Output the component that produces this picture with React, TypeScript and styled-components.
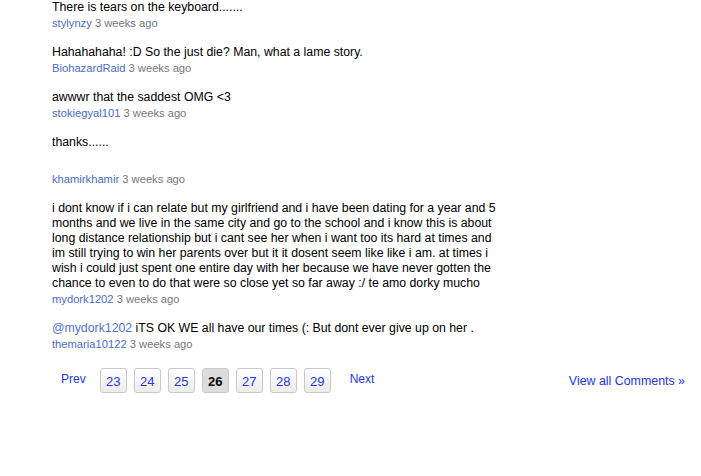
import styled, { createGlobalStyle } from "styled-components";

const GlobalStyle = createGlobalStyle`
  html, body {
    margin: 0;
    padding: 0;
    background: #fff;
  }
  body {
    font-family: "Liberation Sans", Arial, sans-serif;
  }
`;

const Page = styled.div`
  width: 701px;
  height: 476px;
  box-sizing: border-box;
  padding: 0 16px 0 52px;
`;

const CommentList = styled.div`
  display: flex;
  flex-direction: column;
`;

const Comment = styled.div`
  margin-bottom: 15px;
`;

const Body = styled.div<{ $trail?: number }>`
  font-size: 12.3px;
  line-height: 15px;
  color: #000;
  white-space: nowrap;
  padding-bottom: ${(p) => p.$trail ?? 0}px;
`;

const Mention = styled.a`
  color: #4f72db;
  text-decoration: none;
`;

const Meta = styled.div`
  margin-top: 1px;
  font-size: 11.2px;
  line-height: 14px;
  color: #777;
`;

const Author = styled.a`
  color: #4a6bcf;
  text-decoration: none;
`;

const Pager = styled.div`
  display: flex;
  align-items: center;
  margin-top: 2px;
  padding-left: 9px;
`;

const PagerLink = styled.a<{ $side: "prev" | "next" }>`
  font-size: 12px;
  color: #2236e8;
  text-decoration: none;
  margin-top: -3px;
  margin-right: ${(p) => (p.$side === "prev" ? 14 : 0)}px;
  margin-left: ${(p) => (p.$side === "next" ? 19 : 0)}px;
`;

const Pages = styled.div`
  display: flex;
  gap: 7px;
`;

const PageButton = styled.a<{ $active?: boolean }>`
  box-sizing: border-box;
  width: 27px;
  height: 25px;
  display: flex;
  align-items: center;
  justify-content: center;
  padding-top: 1px;
  border: 1px solid #c9c9c9;
  border-radius: 3px;
  font-size: 13px;
  text-decoration: none;
  color: ${(p) => (p.$active ? "#000" : "#2236e8")};
  font-weight: ${(p) => (p.$active ? 700 : 400)};
  background: ${(p) =>
    p.$active ? "#dcdcdc" : "linear-gradient(#ffffff, #ececec)"};
`;

const ViewAll = styled.a`
  margin-left: auto;
  font-size: 12.4px;
  color: #2236e8;
  text-decoration: none;
`;

type Item = {
  lines: React.ReactNode[];
  author: string;
  trail?: number;
};

const comments: Item[] = [
  { lines: ["There is tears on the keyboard......."], author: "stylynzy" },
  {
    lines: ["Hahahahaha! :D So the just die? Man, what a lame story."],
    author: "BiohazardRaid",
  },
  { lines: ["awwwr that the saddest OMG <3"], author: "stokiegyal101" },
  { lines: ["thanks......"], author: "khamirkhamir", trail: 21 },
  {
    lines: [
      "i dont know if i can relate but my girlfriend and i have been dating for a year and 5",
      "months and we live in the same city and go to the school and i know this is about",
      "long distance relationship but i cant see her when i want too its hard at times and",
      "im still trying to win her parents over but it it dosent seem like like i am. at times i",
      "wish i could just spent one entire day with her because we have never gotten the",
      "chance to even to do that were so close yet so far away :/ te amo dorky mucho",
    ],
    author: "mydork1202",
  },
  {
    lines: [
      <>
        <Mention href="#">@mydork1202</Mention> iTS OK WE all have our times
        (: But dont ever give up on her .
      </>,
    ],
    author: "themaria10122",
  },
];

const pages = [23, 24, 25, 26, 27, 28, 29];

export default function App() {
  return (
    <>
      <GlobalStyle />
      <Page>
        <CommentList>
          {comments.map((c, i) => (
            <Comment key={i}>
              <Body $trail={c.trail}>
                {c.lines.map((l, j) => (
                  <div key={j}>{l}</div>
                ))}
              </Body>
              <Meta>
                <Author href="#">{c.author}</Author> 3 weeks ago
              </Meta>
            </Comment>
          ))}
        </CommentList>
        <Pager>
          <PagerLink href="#" $side="prev">
            Prev
          </PagerLink>
          <Pages>
            {pages.map((n) => (
              <PageButton key={n} href="#" $active={n === 26}>
                {n}
              </PageButton>
            ))}
          </Pages>
          <PagerLink href="#" $side="next">
            Next
          </PagerLink>
          <ViewAll href="#">View all Comments »</ViewAll>
        </Pager>
      </Page>
    </>
  );
}
